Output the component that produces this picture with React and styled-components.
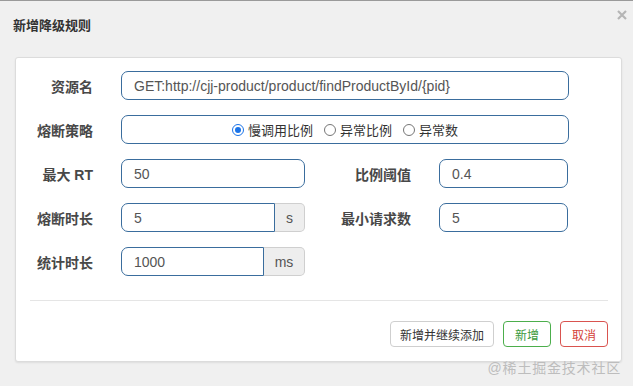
import React, { useState } from "react";
import styled, { createGlobalStyle } from "styled-components";

const GlobalStyle = createGlobalStyle`
  html, body {
    margin: 0;
    padding: 0;
    background: #f0f0f0;
  }
  * {
    box-sizing: border-box;
  }
`;

const FONT = `"Liberation Sans", Arial, "Noto Sans CJK SC", sans-serif`;

const Dialog = styled.div`
  position: relative;
  width: 633px;
  height: 386px;
  background: #f0f0f0;
  border-top: 1px solid #9a9a9a;
  font-family: ${FONT};
  color: #333;
`;

const Header = styled.div`
  display: flex;
  justify-content: space-between;
  align-items: flex-start;
  height: 56px;
  padding-left: 13px;
`;

const Title = styled.h4`
  margin: 16px 0 0;
  font-size: 13px;
  line-height: 17px;
  font-weight: bold;
  color: #333;
`;

const Close = styled.button`
  margin: 8px 5px 0 0;
  padding: 0;
  width: 12px;
  height: 12px;
  border: none;
  background: none;
  display: flex;
  cursor: pointer;
`;

const Panel = styled.div`
  margin: 0 11px 0 15px;
  background: #fff;
  border: 1px solid #dcdcdc;
  border-radius: 3px;
  box-shadow: 0 1px 2px rgba(0, 0, 0, 0.08);
  padding: 13px 13px 14px 0;
`;

const Form = styled.div`
  display: flex;
  flex-direction: column;
  gap: 15px;
`;

const Row = styled.div`
  display: flex;
  align-items: center;
  height: 29px;
`;

const Label = styled.label`
  width: ${(p) => p.$width}px;
  margin-right: 28px;
  text-align: right;
  font-size: 14px;
  font-weight: bold;
  color: #484848;
  white-space: nowrap;
`;

const Field = styled.div`
  display: flex;
  width: ${(p) => p.$width}px;
  height: 29px;
`;

const Input = styled.input`
  flex: 1;
  min-width: 0;
  height: 29px;
  padding: 0 12px;
  border: 1px solid #3a6d9d;
  border-radius: ${(p) => (p.$grouped ? "7px 0 0 7px" : "7px")};
  font-family: ${FONT};
  font-size: 14px;
  color: #555;
  background: #fff;
  outline: none;
`;

const Addon = styled.span`
  display: flex;
  align-items: center;
  justify-content: center;
  width: ${(p) => p.$width}px;
  border: 1px solid #cfcfcf;
  border-left: none;
  border-radius: 0 5px 5px 0;
  background: #eee;
  font-size: 14px;
  color: #555;
`;

const RadioBox = styled.div`
  flex: 0 0 448px;
  height: 29px;
  display: flex;
  align-items: center;
  justify-content: center;
  gap: 11px;
  border: 1px solid #3a6d9d;
  border-radius: 7px;
`;

const RadioItem = styled.label`
  display: flex;
  align-items: center;
  gap: 4px;
  font-size: 13px;
  color: #333;
  cursor: pointer;
`;

const RadioDot = styled.span`
  width: 12px;
  height: 12px;
  border-radius: 50%;
  border: 1px solid ${(p) => (p.$on ? "#1a73e8" : "#767676")};
  display: flex;
  align-items: center;
  justify-content: center;
  &::after {
    content: "";
    width: 6px;
    height: 6px;
    border-radius: 50%;
    background: ${(p) => (p.$on ? "#1a73e8" : "transparent")};
  }
`;

const Divider = styled.hr`
  margin: 24px 0 0 14px;
  border: none;
  border-top: 1px solid #e5e5e5;
`;

const Footer = styled.div`
  display: flex;
  justify-content: flex-end;
  gap: 9px;
  margin-top: 20px;
`;

const Button = styled.button`
  height: 26px;
  padding: 0 ${(p) => (p.$wide ? 9 : 11)}px;
  font-family: ${FONT};
  font-size: 12px;
  background: #fff;
  border-radius: 4px;
  cursor: pointer;
  border: 1px solid ${(p) => p.$border};
  color: ${(p) => p.$color};
`;

const Watermark = styled.div`
  position: absolute;
  right: 12px;
  bottom: 9px;
  font-size: 14px;
  color: #bdbdbd;
  letter-spacing: 0.8px;
`;

const strategies = ["慢调用比例", "异常比例", "异常数"];

function App() {
  const [strategy, setStrategy] = useState(0);

  return (
    <>
      <GlobalStyle />
      <Dialog>
        <Header>
          <Title>新增降级规则</Title>
          <Close aria-label="close">
            <svg width="12" height="12" viewBox="0 0 12 12">
              <path d="M2 2 L10 10 M10 2 L2 10" stroke="#b5b5b5" strokeWidth="2.2" />
            </svg>
          </Close>
        </Header>
        <Panel>
          <Form>
            <Row>
              <Label $width={77}>资源名</Label>
              <Field $width={448}>
                <Input defaultValue="GET:http://cjj-product/product/findProductById/{pid}" />
              </Field>
            </Row>
            <Row>
              <Label $width={77}>熔断策略</Label>
              <RadioBox>
                {strategies.map((s, i) => (
                  <RadioItem key={s} onClick={() => setStrategy(i)}>
                    <RadioDot $on={strategy === i} />
                    {s}
                  </RadioItem>
                ))}
              </RadioBox>
            </Row>
            <Row>
              <Label $width={77}>最大 RT</Label>
              <Field $width={184}>
                <Input defaultValue="50" />
              </Field>
              <Label $width={106}>比例阈值</Label>
              <Field $width={129}>
                <Input defaultValue="0.4" />
              </Field>
            </Row>
            <Row>
              <Label $width={77}>熔断时长</Label>
              <Field $width={184}>
                <Input $grouped defaultValue="5" />
                <Addon $width={30}>s</Addon>
              </Field>
              <Label $width={106}>最小请求数</Label>
              <Field $width={129}>
                <Input defaultValue="5" />
              </Field>
            </Row>
            <Row>
              <Label $width={77}>统计时长</Label>
              <Field $width={184}>
                <Input $grouped defaultValue="1000" />
                <Addon $width={41}>ms</Addon>
              </Field>
            </Row>
          </Form>
          <Divider />
          <Footer>
            <Button $wide $border="#cfcfcf" $color="#333">
              新增并继续添加
            </Button>
            <Button $border="#4cae4c" $color="#3b9a3b">
              新增
            </Button>
            <Button $border="#d9534f" $color="#d43f3a">
              取消
            </Button>
          </Footer>
        </Panel>
        <Watermark>@稀土掘金技术社区</Watermark>
      </Dialog>
    </>
  );
}

export default App;
